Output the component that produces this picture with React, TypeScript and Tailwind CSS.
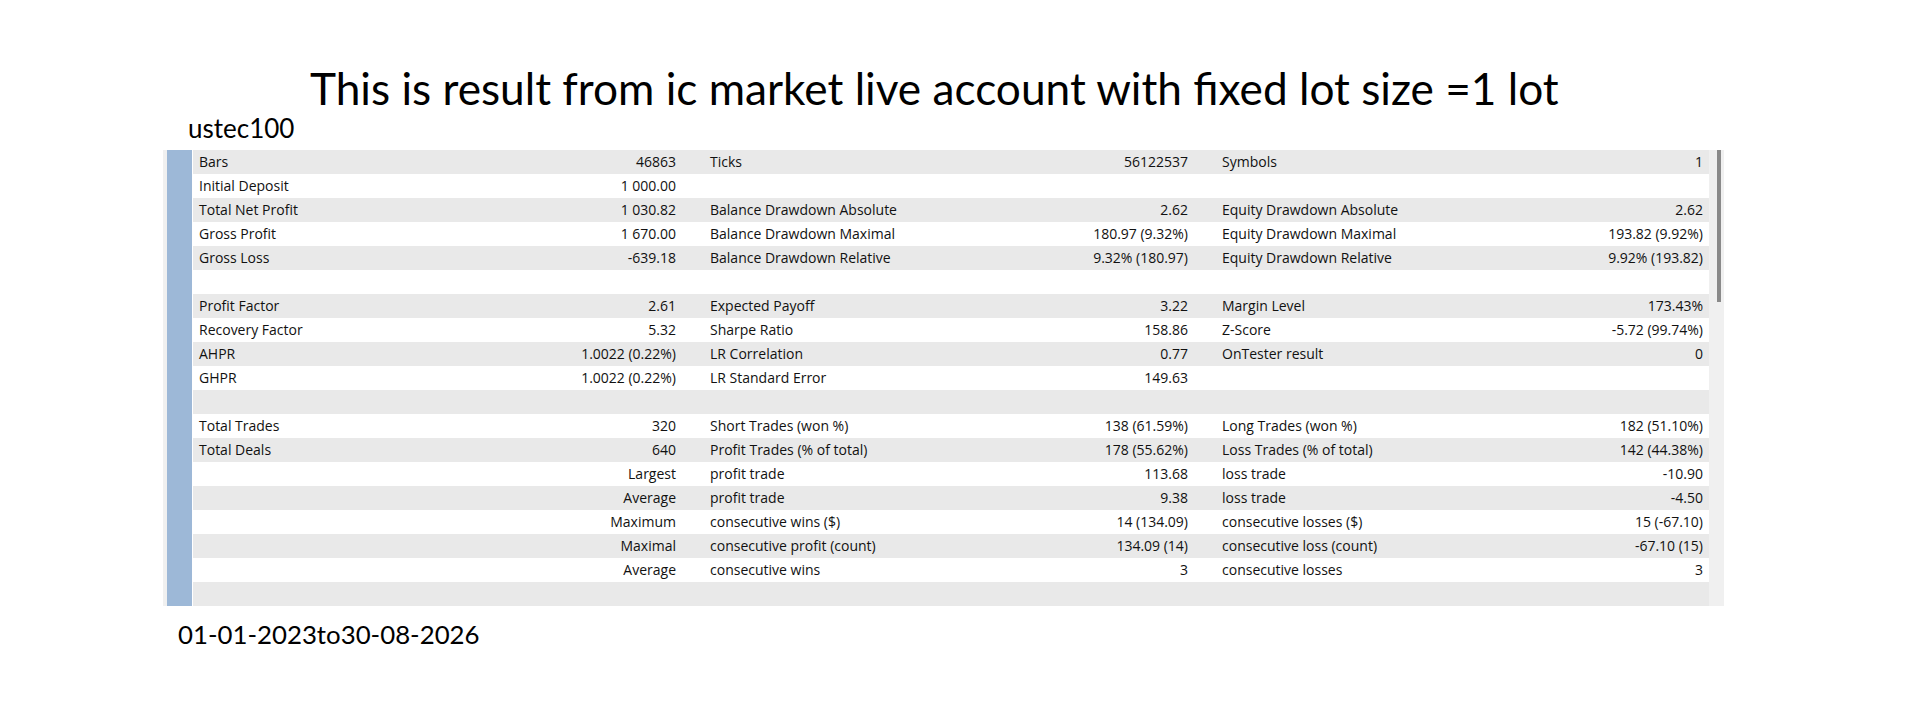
import React from "react";

const rows: string[][] = [
  ["Bars", "46863", "Ticks", "56122537", "Symbols", "1"],
  ["Initial Deposit", "1 000.00", "", "", "", ""],
  ["Total Net Profit", "1 030.82", "Balance Drawdown Absolute", "2.62", "Equity Drawdown Absolute", "2.62"],
  ["Gross Profit", "1 670.00", "Balance Drawdown Maximal", "180.97 (9.32%)", "Equity Drawdown Maximal", "193.82 (9.92%)"],
  ["Gross Loss", "-639.18", "Balance Drawdown Relative", "9.32% (180.97)", "Equity Drawdown Relative", "9.92% (193.82)"],
  ["", "", "", "", "", ""],
  ["Profit Factor", "2.61", "Expected Payoff", "3.22", "Margin Level", "173.43%"],
  ["Recovery Factor", "5.32", "Sharpe Ratio", "158.86", "Z-Score", "-5.72 (99.74%)"],
  ["AHPR", "1.0022 (0.22%)", "LR Correlation", "0.77", "OnTester result", "0"],
  ["GHPR", "1.0022 (0.22%)", "LR Standard Error", "149.63", "", ""],
  ["", "", "", "", "", ""],
  ["Total Trades", "320", "Short Trades (won %)", "138 (61.59%)", "Long Trades (won %)", "182 (51.10%)"],
  ["Total Deals", "640", "Profit Trades (% of total)", "178 (55.62%)", "Loss Trades (% of total)", "142 (44.38%)"],
  ["", "Largest", "profit trade", "113.68", "loss trade", "-10.90"],
  ["", "Average", "profit trade", "9.38", "loss trade", "-4.50"],
  ["", "Maximum", "consecutive wins ($)", "14 (134.09)", "consecutive losses ($)", "15 (-67.10)"],
  ["", "Maximal", "consecutive profit (count)", "134.09 (14)", "consecutive loss (count)", "-67.10 (15)"],
  ["", "Average", "consecutive wins", "3", "consecutive losses", "3"],
  ["", "", "", "", "", ""],
];

function Cell({ label, value }: { label: string; value: string }) {
  return (
    <div className="flex justify-between px-[6px] whitespace-nowrap">
      <span>{label}</span>
      <span>{value}</span>
    </div>
  );
}

export default function App() {
  return (
    <div className="w-[1920px] h-[720px] bg-white text-black overflow-hidden font-['Lato',sans-serif]">
      <div className="pt-[63px] pl-[310px] text-[44.2px] leading-[50px] whitespace-nowrap">
        This is result from ic market live account with fixed lot size =1 lot
      </div>
      <div className="pl-[188px] text-[26px] leading-[30px]">ustec100</div>
      <div className="mt-[7px] ml-[163px] flex h-[456px]">
        <div className="w-[4px] bg-[#f0f0f0]" />
        <div className="w-[25px] bg-[#9db8d7]" />
        <div className="w-[1px] bg-white" />
        <div className="w-[1516px] flex flex-col font-['Open_Sans',sans-serif] text-[14px] leading-[24px] text-[#111]">
          {rows.map((r, i) => (
            <div
              key={i}
              className={
                i % 2 === 0
                  ? "grid grid-cols-[489px_490px_493px] gap-x-[22px] h-[24px] bg-[#e9e9e9]"
                  : "grid grid-cols-[489px_490px_493px] gap-x-[22px] h-[24px] bg-white"
              }
            >
              <Cell label={r[0]} value={r[1]} />
              <Cell label={r[2]} value={r[3]} />
              <Cell label={r[4]} value={r[5]} />
            </div>
          ))}
        </div>
        <div className="w-[15px] bg-[#f0f0f0] pl-[8px]">
          <div className="w-[4px] h-[152px] bg-[#8a8a8a]" />
        </div>
      </div>
      <div className="mt-[13px] pl-[178px] text-[25.8px] leading-[30px]">01-01-2023to30-08-2026</div>
    </div>
  );
}
